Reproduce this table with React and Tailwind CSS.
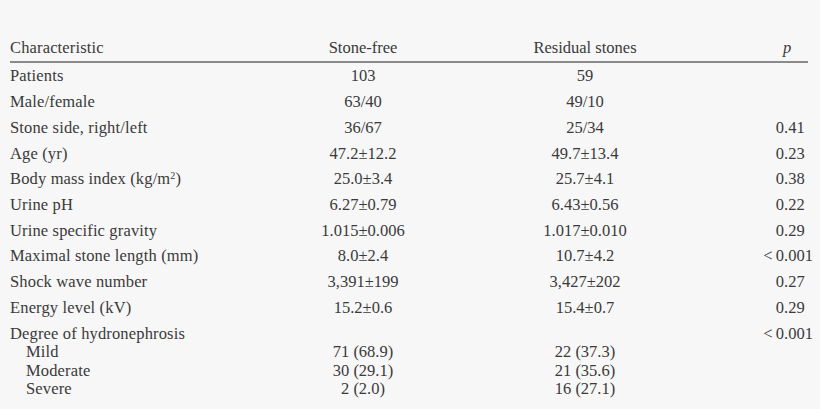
const ROWS = [
  { label: 'Patients', a: '103', b: '59', p: null },
  { label: 'Male/female', a: '63/40', b: '49/10', p: null },
  { label: 'Stone side, right/left', a: '36/67', b: '25/34', p: ['0', '.41'] },
  { label: 'Age (yr)', a: '47.2\u00b112.2', b: '49.7\u00b113.4', p: ['0', '.23'] },
  { label: 'bmi', a: '25.0\u00b13.4', b: '25.7\u00b14.1', p: ['0', '.38'] },
  { label: 'Urine pH', a: '6.27\u00b10.79', b: '6.43\u00b10.56', p: ['0', '.22'] },
  { label: 'Urine specific gravity', a: '1.015\u00b10.006', b: '1.017\u00b10.010', p: ['0', '.29'] },
  { label: 'Maximal stone length (mm)', a: '8.0\u00b12.4', b: '10.7\u00b14.2', p: ['<\u20090', '.001'] },
  { label: 'Shock wave number', a: '3,391\u00b1199', b: '3,427\u00b1202', p: ['0', '.27'] },
  { label: 'Energy level (kV)', a: '15.2\u00b10.6', b: '15.4\u00b10.7', p: ['0', '.29'] },
]

const SUB = [
  { label: 'Mild', a: '71 (68.9)', b: '22 (37.3)' },
  { label: 'Moderate', a: '30 (29.1)', b: '21 (35.6)' },
  { label: 'Severe', a: '2 (2.0)', b: '16 (27.1)' },
]

// p 值以小數點對齊
function PCell({ p }) {
  return (
    <div className="flex">
      <span className="w-[77px] text-right">{p ? p[0] : ''}</span>
      <span>{p ? p[1] : ''}</span>
    </div>
  )
}

function Label({ text }) {
  if (text === 'bmi') {
    return (
      <span>
        Body mass index (kg/m<sup className="text-[10px]">2</sup>)
      </span>
    )
  }
  return <span>{text}</span>
}

export default function App() {
  return (
    <div
      className="h-[409px] w-[820px] bg-[#f7f7f7] pl-[10px] pt-[35px] text-[16.5px] text-[#3a3a3a]"
      style={{ fontFamily: '"Liberation Serif", "DejaVu Serif", serif' }}
    >
      {/* header */}
      <div className="flex h-[26px] items-center">
        <div className="w-[253px] tracking-[0.15px]">Characteristic</div>
        <div className="w-[200px] text-center">Stone-free</div>
        <div className="w-[244px] text-center">Residual stones</div>
        <div className="flex">
          <span className="w-[76px]" />
          <span className="italic">p</span>
        </div>
      </div>
      <div className="h-[2px] w-[798px] bg-[#8a8a8a]" />

      {ROWS.map(r => (
        <div key={r.label} className="flex h-[25.7px] items-center pt-[2px]">
          <div className="w-[253px] tracking-[0.15px]">
            <Label text={r.label} />
          </div>
          <div className="w-[200px] text-center">{r.a}</div>
          <div className="w-[244px] text-center">{r.b}</div>
          <PCell p={r.p} />
        </div>
      ))}

      <div className="flex h-[22.5px] items-center pt-[6px]">
        <div className="w-[253px] tracking-[0.15px]">Degree of hydronephrosis</div>
        <div className="w-[200px]" />
        <div className="w-[244px]" />
        <PCell p={['<\u20090', '.001']} />
      </div>
      {SUB.map(r => (
        <div key={r.label} className="flex h-[18.4px] items-center pt-[2px]">
          <div className="w-[253px] pl-[16px] tracking-[0.15px]">{r.label}</div>
          <div className="w-[200px] text-center">{r.a}</div>
          <div className="w-[244px] text-center">{r.b}</div>
        </div>
      ))}
    </div>
  )
}
